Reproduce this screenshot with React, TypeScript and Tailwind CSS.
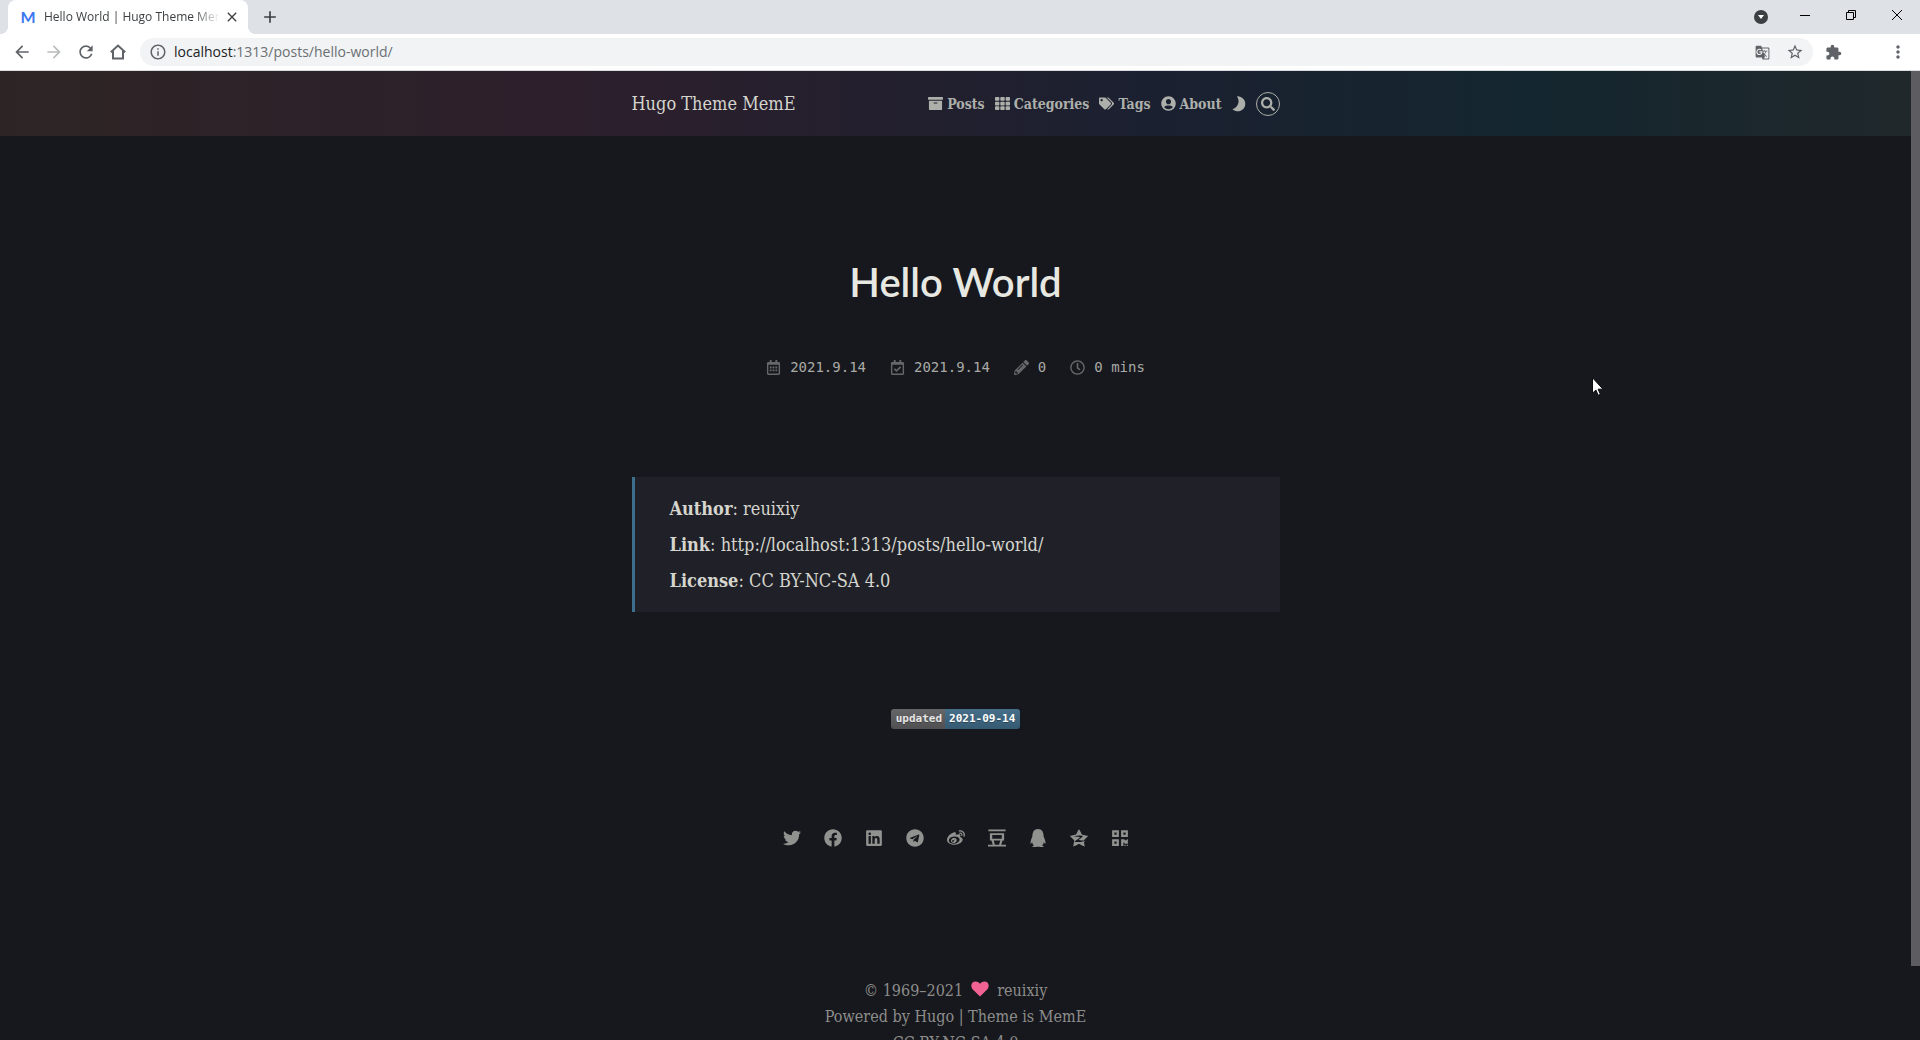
import React from 'react';
import {
  FaArchive,
  FaFacebook,
  FaLinkedin,
  FaPencilAlt,
  FaQq,
  FaQrcode,
  FaRegCalendarAlt,
  FaRegCalendarCheck,
  FaRegClock,
  FaSearch,
  FaTags,
  FaTelegram,
  FaTh,
  FaTwitter,
  FaUserCircle,
  FaWeibo,
} from 'react-icons/fa';
import {
  MdAdd,
  MdArrowBack,
  MdArrowForward,
  MdClose,
  MdExtension,
  MdGTranslate,
  MdInfoOutline,
  MdMoreVert,
  MdRefresh,
  MdStarBorder,
} from 'react-icons/md';
import { SiDouban, SiQzone } from 'react-icons/si';

function HomeIcon() {
  return (
    <svg width="16" height="16" viewBox="0 0 16 16" fill="none" stroke="currentColor" strokeWidth="2">
      <path d="M.8 8.2 8 1.6l7.2 6.6M3 7v7.6h10V7" />
    </svg>
  );
}

function MoonIcon() {
  return (
    <svg width="14" height="16" viewBox="0 0 14 16" fill="currentColor">
      <path d="M5 .4A7.5 7.5 0 1 1 .4 13.1 8.2 8.2 0 0 0 5 .4Z" />
    </svg>
  );
}

function Favicon() {
  return (
    <span aria-hidden="true" className="w-4 text-center font-['Lato',sans-serif] text-base font-bold text-[#3b78f0]">
      M
    </span>
  );
}

function TabStrip() {
  return (
    <div className="flex h-[34px] bg-[#dee1e6] text-[#3c4043]">
      <div className="w-2 bg-[radial-gradient(circle_at_top_left,transparent_8px,white_8px)] bg-size-[8px_8px] bg-bottom-left bg-no-repeat" />
      <div className="flex w-60 items-center rounded-t-lg bg-white pr-2 pl-3">
        <Favicon />
        <span className="ml-2 min-w-0 flex-1 overflow-hidden text-xs whitespace-nowrap [mask-image:linear-gradient(to_right,black_85%,transparent)]">
          Hello World | Hugo Theme MemE
        </span>
        <button aria-label="Close tab" className="ml-1">
          <MdClose size={16} />
        </button>
      </div>
      <div className="w-2 bg-[radial-gradient(circle_at_top_right,transparent_8px,white_8px)] bg-size-[8px_8px] bg-bottom-left bg-no-repeat" />
      <button aria-label="New tab" className="ml-1">
        <MdAdd size={20} />
      </button>
      <div className="ml-auto flex items-center pr-[18px] text-black">
        <button aria-label="Search tabs" className="mr-9 flex size-[14px] items-center justify-center rounded-full bg-[#3c4043]">
          <svg width="6" height="4" viewBox="0 0 6 4" fill="white">
            <path d="M0 0h6L3 4z" />
          </svg>
        </button>
        <div className="mb-1 flex items-center gap-9 pb-px">
          <button aria-label="Minimize" className="-ml-1">
            <svg width="10" height="10" viewBox="0 0 10 10" stroke="currentColor">
              <path d="M0 5.5h10" />
            </svg>
          </button>
          <button aria-label="Restore">
            <svg width="10" height="10" viewBox="0 0 10 10" fill="none" stroke="currentColor">
              <path d="M.5 2.5h7v7h-7zM2.5 2.5v-2h7v7h-2" />
            </svg>
          </button>
          <button aria-label="Close window">
            <svg width="10" height="10" viewBox="0 0 10 10" stroke="currentColor">
              <path d="m0 0 10 10M10 0 0 10" />
            </svg>
          </button>
        </div>
      </div>
    </div>
  );
}

function Toolbar() {
  return (
    <div className="flex h-[37px] items-center border-b border-[#dadce0] bg-white pr-3 pl-3 text-[#5f6368]">
      <div className="flex items-center gap-3">
        <button aria-label="Back"><MdArrowBack size={20} /></button>
        <button aria-label="Forward" className="text-[#babcbe]"><MdArrowForward size={20} /></button>
        <button aria-label="Reload"><MdRefresh size={20} /></button>
        <button aria-label="Home" className="flex w-5 justify-center"><HomeIcon /></button>
      </div>
      <div className="ml-3 flex h-7 flex-1 items-center rounded-full bg-[#f1f3f4] px-[9px]">
        <MdInfoOutline size={18} />
        <a href="#address" className="ml-[7px] text-sm text-[#6b6f73]">
          <span className="text-[#202124]">localhost</span>:1313/posts/hello-world/
        </a>
        <button aria-label="Translate this page" className="ml-auto"><MdGTranslate size={15} /></button>
        <button aria-label="Bookmark this tab" className="ml-4"><MdStarBorder size={18} /></button>
      </div>
      <button aria-label="Extensions" className="ml-3"><MdExtension size={17} /></button>
      <button aria-label="Menu" className="ml-[46px]"><MdMoreVert size={20} /></button>
    </div>
  );
}

const navItems = [
  { label: 'Posts', icon: FaArchive },
  { label: 'Categories', icon: FaTh },
  { label: 'Tags', icon: FaTags },
  { label: 'About', icon: FaUserCircle },
];

function SiteHeader() {
  return (
    <header className="flex h-[65px] justify-center bg-[linear-gradient(to_right,#2d2525,#2d1f2c_30%,#1b2030_60%,#14262f_80%,#20282b)]">
      <div className="flex w-full max-w-[648px] items-center justify-between">
        <a href="#home" className="text-lg text-[#d5d5ce]">Hugo Theme MemE</a>
        <nav className="flex items-center gap-[10px] text-sm font-bold text-[#adafaa]">
          {navItems.map(({ label, icon: Icon }) => (
            <a key={label} href={`#${label.toLowerCase()}`} className="flex items-center gap-1">
              <Icon size={15} />
              {label}
            </a>
          ))}
          <button aria-label="Toggle dark mode"><MoonIcon /></button>
          <button aria-label="Search" className="flex size-6 items-center justify-center rounded-full border border-current">
            <FaSearch size={14} />
          </button>
        </nav>
      </div>
    </header>
  );
}

const metaItems = [
  { text: '2021.9.14', icon: FaRegCalendarAlt },
  { text: '2021.9.14', icon: FaRegCalendarCheck },
  { text: '0', icon: FaPencilAlt },
  { text: '0 mins', icon: FaRegClock },
];

const socials = [
  { name: 'Twitter', icon: FaTwitter },
  { name: 'Facebook', icon: FaFacebook },
  { name: 'LinkedIn', icon: FaLinkedin },
  { name: 'Telegram', icon: FaTelegram },
  { name: 'Weibo', icon: FaWeibo },
  { name: 'Douban', icon: SiDouban },
  { name: 'QQ', icon: FaQq },
  { name: 'Qzone', icon: SiQzone },
  { name: 'QR code', icon: FaQrcode },
];

function Article() {
  return (
    <main className="mx-auto flex w-full max-w-[648px] flex-col items-center pt-[122px]">
      <h1 className="font-['Lato',sans-serif] text-[40px] leading-[48px] font-semibold text-[#e8e8e2]">Hello World</h1>

      <ul className="mt-[51px] flex gap-6 font-['DejaVu_Sans_Mono',monospace] text-sm text-[#a9aaa6]">
        {metaItems.map(({ text, icon: Icon }, i) => (
          <li key={i} className="flex items-center gap-[9px]">
            <Icon size={15} className="text-[#66676a]" />
            {text}
          </li>
        ))}
      </ul>

      <div className="mt-[100px] w-full border-l-3 border-[#3d6e8c] bg-[#202128] pt-[14px] pb-[13px] pl-[35px] text-lg leading-9 text-[#d5d5ce]">
        <p><strong>Author</strong>: reuixiy</p>
        <p><strong>Link</strong>: <a href="#post">http://localhost:1313/posts/hello-world/</a></p>
        <p><strong>License</strong>: <a href="#license">CC BY-NC-SA 4.0</a></p>
      </div>

      <div className="mt-[97px] flex h-5 overflow-hidden rounded-[3px] font-['DejaVu_Sans_Mono',monospace] text-[11px] leading-5 font-bold text-white text-shadow-[0_1px_0_rgb(0_0_0/0.3)]">
        <span className="bg-linear-to-b from-[#666668] to-[#505052] pr-[3px] pl-[5px] text-[#e4e4e4]">updated</span>
        <span className="bg-linear-to-b from-[#466f8a] to-[#355a72] pr-[5px] pl-1">2021-09-14</span>
      </div>

      <div className="mt-[100px] flex gap-[23px] text-[#90928f]">
        {socials.map(({ name, icon: Icon }) => (
          <a key={name} href={`#${name}`} aria-label={name}>
            <Icon size={18} />
          </a>
        ))}
      </div>
    </main>
  );
}

function Footer() {
  return (
    <footer className="mt-[131px] text-center text-base leading-[26px] text-[#8c8d8b]">
      <p className="flex items-center justify-center gap-2">
        <span>© 1969–2021</span>
        <svg width="18" height="16" viewBox="0 0 18 16" fill="#f06292" className="-mt-1">
          <path d="M9 15.5 1.800 8.400C-.2 6.300 0 3.200 1.600 1.600 3.600-.2 6.900.1 9 2.800 11.100.1 14.400-.2 16.400 1.600 18 3.200 18.200 6.300 16.200 8.400Z" />
        </svg>
        <span>reuixiy</span>
      </p>
      <p>Powered by <a href="#hugo">Hugo</a> | Theme is <a href="#meme">MemE</a></p>
      <p><a href="#license">CC BY-NC-SA 4.0</a></p>
    </footer>
  );
}

export default function App() {
  return (
    <div className="flex h-screen flex-col overflow-hidden bg-[#17181d]">
      <div className="shrink-0 font-['Open_Sans',sans-serif]">
        <TabStrip />
        <Toolbar />
      </div>
      <div className="flex min-h-0 flex-1">
        <div className="min-w-0 flex-1 overflow-hidden font-['DejaVu_Serif_Condensed','DejaVu_Serif',serif]">
          <SiteHeader />
          <Article />
          <Footer />
        </div>
        <div className="w-[9px]">
          <div className="h-[92.4%] bg-[#5d5d61]" />
        </div>
      </div>
      <svg width="13" height="20" viewBox="0 0 13 20" className="absolute top-[377px] left-[1592px]" fill="white" stroke="#0b0b10">
        <path d="M.5.8v15.400l3.400-3.200 2.300 5.300 2.200-1-2.300-5.100h4.900z" />
      </svg>
    </div>
  );
}
